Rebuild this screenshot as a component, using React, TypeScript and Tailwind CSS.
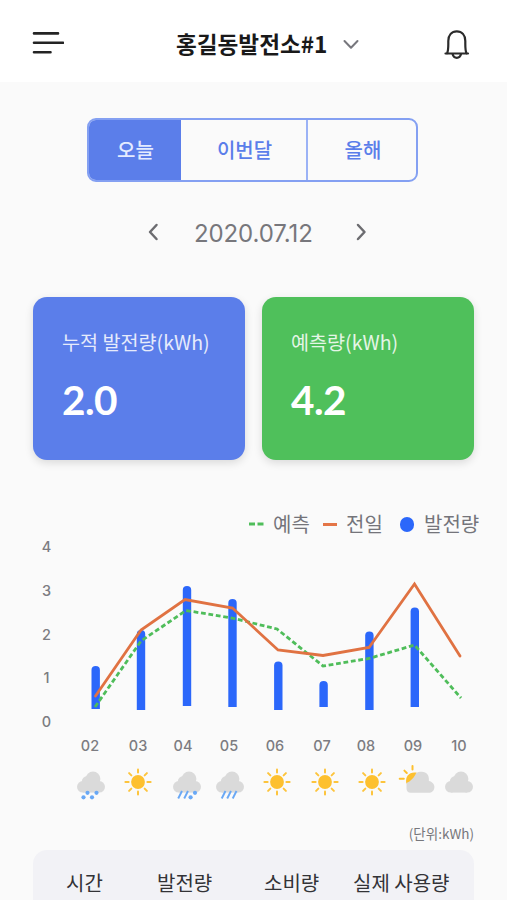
import React from "react";

const kr = "font-['Noto_Sans_CJK_KR',sans-serif]";
const num = "font-['Inter',sans-serif]";

const BARS: [number, number, number][] = [
  [95.7, 666, 709],
  [141, 630, 710],
  [187, 586, 706],
  [232.5, 599, 707],
  [278.3, 661.5, 710],
  [323.6, 681, 707],
  [369.4, 631.5, 710],
  [414.8, 607.5, 707],
];

const HOURS = [
  ["02", ""],
  ["03", "ml-[20px]"],
  ["04", "ml-[17px]"],
  ["05", "ml-[18px]"],
  ["06", "ml-[18px]"],
  ["07", "ml-[19px]"],
  ["08", "ml-[16px]"],
  ["09", "ml-[19px]"],
  ["10", "ml-[18px]"],
];

const WEATHER = [
  ["snow", ""],
  ["sun", "ml-[17px]"],
  ["sleet", "ml-[19px]"],
  ["rain", "ml-[13px]"],
  ["sun", "ml-[17px]"],
  ["sun", "ml-[18px]"],
  ["sun", "ml-[17px]"],
  ["partly", "ml-[15px]"],
  ["cloud", "ml-[12px]"],
];

function Weather({ kind, className }: { kind: string; className: string }) {
  const rain = (xs: number[]) =>
    xs.map((x) => <path key={x} d={`M${x} 27 L${x - 3.8} 34.5`} stroke="#69a8f5" strokeWidth="1.9" />);
  const dots = (pts: number[][]) =>
    pts.map(([x, y]) => <circle key={x} cx={x} cy={y} r="2.1" fill="#69a8f5" />);
  return (
    <svg className={`h-9 w-[30px] shrink-0 overflow-visible ${className}`} viewBox="0 0 30 36" fill="none">
      {kind === "sun" && (
        <g>
          <circle cx="15" cy="18" r="6.9" fill="#fdc02f" />
          {[0, 45, 90, 135, 180, 225, 270, 315].map((a) => (
            <path key={a} d="M15 8.6 V5.4" stroke="#fdc43c" strokeWidth="2" strokeLinecap="round" transform={`rotate(${a} 15 18)`} />
          ))}
        </g>
      )}
      {kind === "partly" && (
        <g>
          <path d="M4.3 19.5 C2.8 12 8 7.3 14.8 8.8 L14 15 L8 19 Z" fill="#fdc02f" />
          <path d="M-2.3 14.8 H1.8 M2.4 6.6 L4.8 9 M10.5 2 V5.6" stroke="#fdc02f" strokeWidth="2" strokeLinecap="round" />
          <path d="M8.8 28.8 C5.8 28.8 4.5 26.8 4.5 24.2 V19 C8.5 17.5 12.5 13.5 14 9.3 C15.5 8.2 17.5 7.8 19.8 7.8 C24.8 7.8 27.4 11.3 26.9 17 C30.2 17.7 32.4 20 32.4 23 C32.4 26.6 29.8 28.8 26.5 28.8 Z" fill="#dadada" />
        </g>
      )}
      {kind !== "sun" && kind !== "partly" && (
        <g fill="#dadada">
          <circle cx="6.8" cy="22.8" r="5.8" />
          <circle cx="11.4" cy="17.6" r="5.6" />
          <circle cx="17" cy="15" r="7.4" />
          <circle cx="23.2" cy="22.8" r="5.8" />
          <path d="M6.8 17.5 H23.2 V28.6 H6.8 Z" />
        </g>
      )}
      {kind === "snow" && dots([[7.5, 33.3], [11.5, 28.8], [16, 33.3], [20.5, 28.8]])}
      {kind === "rain" && rain([10.5, 16, 21.5])}
      {kind === "sleet" && (
        <g>
          {rain([10, 16])}
          {dots([[18.6, 33.3], [23, 28.8]])}
        </g>
      )}
    </svg>
  );
}

function StatCard({ label, value, color }: { label: string; value: string; color: string }) {
  return (
    <div className={`h-[163px] w-[212px] rounded-[14px] pl-[29px] pt-[29px] text-white shadow-[0_3px_8px_rgba(0,0,0,0.13)] ${color}`}>
      <div className={`${kr} h-8 whitespace-nowrap text-[19.6px] leading-8 opacity-85`}>{label}</div>
      <div className="mt-[18px] font-['Lato',sans-serif] text-[40.5px] leading-[48px] font-bold tracking-[-0.6px]">{value}</div>
    </div>
  );
}

export default function App() {
  return (
    <div className={`${kr} h-[900px] w-[507px] overflow-hidden bg-[#fafafa]`}>
      <header className="flex h-[82px] items-center bg-white pt-1">
        <svg className="ml-8 h-6 w-8" viewBox="0 0 32 24" fill="none" stroke="#242424" strokeWidth="2.6" strokeLinecap="round">
          <path d="M2 2.4 H26 M2 11.8 H31 M2 21.3 H18.5" />
        </svg>
        <h1 className="ml-[112px] w-[154px] whitespace-nowrap pt-0.5 text-[22.6px] leading-8 font-bold text-[#191919]">홍길동발전소#1</h1>
        <svg className="ml-3 mt-1 h-3 w-[18px]" viewBox="0 0 18 12" fill="none" stroke="#77777d" strokeWidth="2" strokeLinecap="round" strokeLinejoin="round">
          <path d="M2.5 2 L9 8.7 L15.5 2" />
        </svg>
        <svg className="ml-[83px] mt-1 h-8 w-[28px]" viewBox="0 0 28 32" fill="none" stroke="#2b2b2b" strokeWidth="2.2" strokeLinecap="round" strokeLinejoin="round">
          <path d="M2.5 24.5 H25 M4 24.5 C5.3 22 5.3 19.5 5.3 15 V12 C5.3 6 8.7 2.4 13.8 2.4 C18.9 2.4 22.3 6 22.3 12 V15 C22.3 19.5 22.3 22 23.6 24.5 M9.5 25 C10.2 27.5 11.7 28.8 13.8 28.8 C15.9 28.8 17.4 27.5 18.1 25" />
        </svg>
      </header>

      <div className="ml-[87px] mt-9 flex h-16 w-[331px] overflow-hidden rounded-[9px] border-2 border-[#84a0f2] text-center text-[20px] leading-[60px] font-medium text-[#5b7eea]">
        <div className="-my-0.5 -ml-0.5 w-[94px] bg-[#5b7eea] pl-[3px] pt-0.5 text-[#e4ebff]">오늘</div>
        <div className="w-[127px] border-r-2 border-[#9bb2f6] pl-0.5">이번달</div>
        <div className="flex-1 pl-0.5">올해</div>
      </div>

      <div className="mt-[30px] flex h-10 items-center text-[#77777c]">
        <svg className="ml-[147px] h-5 w-3" viewBox="0 0 12 20" fill="none" stroke="#6c6c70" strokeWidth="2.5" strokeLinecap="round" strokeLinejoin="round">
          <path d="M9.5 3 L3 10 L9.5 17" />
        </svg>
        <div className={`${num} ml-[35px] w-[120px] pt-[3px] text-[24px] tracking-[-0.1px]`}>2020.07.12</div>
        <svg className="ml-[41px] h-5 w-3" viewBox="0 0 12 20" fill="none" stroke="#6c6c70" strokeWidth="2.5" strokeLinecap="round" strokeLinejoin="round">
          <path d="M3 3 L9.5 10 L3 17" />
        </svg>
      </div>

      <div className="mt-[45px] flex gap-[17px] pl-[33px]">
        <StatCard label="누적 발전량(kWh)" value="2.0" color="bg-[#5b7eea]" />
        <StatCard label="예측량(kWh)" value="4.2" color="bg-[#4fc05b]" />
      </div>

      <div className="mt-[50px] flex h-7 items-center whitespace-nowrap pl-[249px] text-[20px] leading-7 text-[#74747a]">
        <svg className="h-1 w-[15px]" viewBox="0 0 15 4">
          <path d="M0 2 H6 M8.5 2 H14.5" stroke="#4fbd5a" strokeWidth="2.8" />
        </svg>
        <span className="ml-[9px] w-9">예측</span>
        <div className="ml-[14px] h-[3px] w-[14px] bg-[#e47547]" />
        <span className="ml-[9px] w-9">전일</span>
        <div className="ml-[18px] h-[15px] w-[14px] rounded-full bg-[#2b67fa]" />
        <span className="ml-[10px]">발전량</span>
      </div>

      <div className="flex h-[192px]">
        <div className={`${num} ml-[37px] flex w-[19px] flex-col justify-between text-center text-[14.5px] leading-[17px] font-medium text-[#7c7c81]`}>
          <span>4</span>
          <span>3</span>
          <span>2</span>
          <span>1</span>
          <span>0</span>
        </div>
        <svg className="mt-0.5 h-[180px] w-[420px]" viewBox="56 540 420 180" fill="none">
          {BARS.map(([x, top, bottom]) => (
            <path key={x} fill="#2b67fa" d={`M${x - 4.2} ${bottom} V${top + 4} Q${x - 4.2} ${top} ${x} ${top} Q${x + 4.2} ${top} ${x + 4.2} ${top + 4} V${bottom} Z`} />
          ))}
          <polyline points="95,707 141,641 186,610.5 232,618 277,629 323,666 369,658.5 414.5,645 461,698" stroke="#4fbd5a" strokeWidth="2.8" strokeDasharray="4.8 2.7" />
          <polyline points="95.5,696 141,630 185,599.5 232.5,608 278,650 323,655.5 369,647.5 414.5,584 460,656" stroke="#e07242" strokeWidth="2.8" strokeLinecap="round" />
        </svg>
      </div>

      <div className={`${num} mt-[6px] flex pl-[76px] text-center text-[14.5px] leading-5 font-medium text-[#7c7c81]`}>
        {HOURS.map(([h, gap]) => (
          <span key={h} className={`w-7 shrink-0 ${gap}`}>{h}</span>
        ))}
      </div>
      <div className="mt-2 flex pl-[76px]">
        {WEATHER.map(([kind, gap], i) => (
          <Weather key={i} kind={kind} className={gap} />
        ))}
      </div>

      <div className="mt-[23px] h-5 pr-[33px] text-right text-[13.5px] leading-5 text-[#77777c]">(단위:kWh)</div>

      <div className="ml-[33px] mt-[7px] flex h-[80px] w-[441px] whitespace-nowrap rounded-t-[14px] bg-[#f2f2f6] pt-[17px] text-[20px] leading-8 text-[#333336]">
        <span className="ml-[33px] w-[91px]">시간</span>
        <span className="w-[107px]">발전량</span>
        <span className="w-[89px]">소비량</span>
        <span>실제 사용량</span>
      </div>
    </div>
  );
}
